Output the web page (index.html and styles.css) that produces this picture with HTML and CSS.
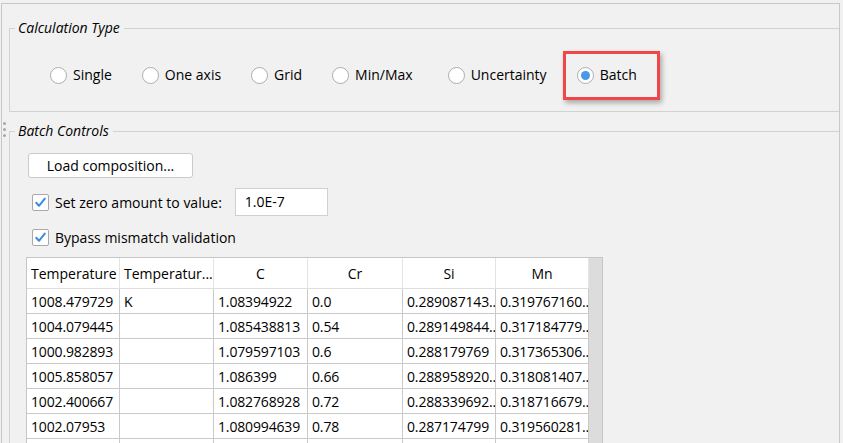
FILE: index.html
```html
<!DOCTYPE html>
<html>
<head>
<meta charset="utf-8">
<link rel="stylesheet" href="styles.css">
</head>
<body>
<div class="panel">
  <span class="grip"><i></i><i></i><i></i></span>
  <fieldset class="group calc">
    <legend>Calculation Type</legend>
    <div class="radio-row">
      <label class="radio"><span class="circle"></span>Single</label>
      <label class="radio"><span class="circle"></span>One axis</label>
      <label class="radio"><span class="circle"></span>Grid</label>
      <label class="radio"><span class="circle"></span>Min/Max</label>
      <label class="radio wide"><span class="circle"></span>Uncertainty</label>
      <label class="radio selected"><span class="circle"><span class="dot"></span></span>Batch<span class="highlight"></span></label>
    </div>
  </fieldset>
  <fieldset class="group batch">
    <legend>Batch Controls</legend>
    <button class="btn">Load composition...</button>
    <div class="check-row first">
      <span class="checkbox"><svg width="15" height="15" viewBox="0 0 15 15"><path d="M3.2 7.8 L6 10.8 L11.8 3.6" fill="none" stroke="#3a8be2" stroke-width="2" stroke-linecap="round" stroke-linejoin="round"/></svg></span>
      <span class="check-label">Set zero amount to value:</span>
      <span class="field">1.0E-7</span>
    </div>
    <div class="check-row second">
      <span class="checkbox"><svg width="15" height="15" viewBox="0 0 15 15"><path d="M3.2 7.8 L6 10.8 L11.8 3.6" fill="none" stroke="#3a8be2" stroke-width="2" stroke-linecap="round" stroke-linejoin="round"/></svg></span>
      <span class="check-label">Bypass mismatch validation</span>
    </div>
    <div class="table">
      <div class="grid">
        <div class="hcell">Temperature</div>
        <div class="hcell">Temperatur...</div>
        <div class="hcell center">C</div>
        <div class="hcell center">Cr</div>
        <div class="hcell center">Si</div>
        <div class="hcell center">Mn</div>

        <div class="cell">1008.479729</div>
        <div class="cell">K</div>
        <div class="cell">1.08394922</div>
        <div class="cell">0.0</div>
        <div class="cell">0.289087143...</div>
        <div class="cell">0.319767160...</div>

        <div class="cell">1004.079445</div>
        <div class="cell"></div>
        <div class="cell">1.085438813</div>
        <div class="cell">0.54</div>
        <div class="cell">0.289149844...</div>
        <div class="cell">0.317184779...</div>

        <div class="cell">1000.982893</div>
        <div class="cell"></div>
        <div class="cell">1.079597103</div>
        <div class="cell">0.6</div>
        <div class="cell">0.288179769</div>
        <div class="cell">0.317365306...</div>

        <div class="cell">1005.858057</div>
        <div class="cell"></div>
        <div class="cell">1.086399</div>
        <div class="cell">0.66</div>
        <div class="cell">0.288958920...</div>
        <div class="cell">0.318081407...</div>

        <div class="cell">1002.400667</div>
        <div class="cell"></div>
        <div class="cell">1.082768928</div>
        <div class="cell">0.72</div>
        <div class="cell">0.288339692...</div>
        <div class="cell">0.318716679...</div>

        <div class="cell">1002.07953</div>
        <div class="cell"></div>
        <div class="cell">1.080994639</div>
        <div class="cell">0.78</div>
        <div class="cell">0.287174799</div>
        <div class="cell">0.319560281...</div>

        <div class="cell">1003.512204</div>
        <div class="cell"></div>
        <div class="cell">1.083216475</div>
        <div class="cell">0.84</div>
        <div class="cell">0.288610432...</div>
        <div class="cell">0.318390512...</div>
      </div>
      <div class="scroll"></div>
    </div>
  </fieldset>
</div>
</body>
</html>
```

FILE: styles.css
```css
html, body {
  margin: 0;
  padding: 0;
  height: 100%;
  overflow: hidden;
}
body {
  background: #f1f1f1;
  font-family: "Open Sans", "Noto Sans", sans-serif;
  font-size: 14px;
  color: #000;
}
.panel {
  position: relative;
  margin: 3px 3px 0 1px;
  border: 1px solid #c8c8c8;
  border-bottom: 0;
  height: 440px;
  box-sizing: border-box;
}
.grip {
  position: absolute;
  left: 1px;
  top: 118px;
  display: flex;
  flex-direction: column;
  gap: 3px;
}
.grip i {
  display: block;
  width: 3px;
  height: 3px;
  border-radius: 50%;
  background: #a8a8a8;
}
.group {
  margin: 0 0 0 7px;
  padding: 0;
  border: 1px solid #d2d2d2;
  border-right: 0;
  min-width: 0;
}
.group legend {
  margin-left: 5px;
  padding: 0 4px 0 3px;
  font-style: italic;
  line-height: 18px;
  font-size: 14px;
}
.calc {
  margin-top: 15px;
}
.radio-row {
  display: flex;
  align-items: center;
  height: 20px;
  padding: 28px 0 26px 40px;
  gap: 30px;
}
.radio {
  position: relative;
  display: inline-flex;
  align-items: center;
  gap: 6px;
  line-height: 20px;
  white-space: nowrap;
}
.radio.wide {
  margin-left: 5px;
}
.circle {
  width: 15px;
  height: 15px;
  border: 1px solid #adadad;
  border-radius: 50%;
  background: #fff;
  display: inline-flex;
  align-items: center;
  justify-content: center;
}
.dot {
  width: 9px;
  height: 9px;
  border-radius: 50%;
  background: #4a98e6;
}
.highlight {
  position: absolute;
  left: -14px;
  top: -14px;
  width: 97px;
  height: 49px;
  box-sizing: border-box;
  border: 3px solid #f0464a;
  box-shadow: 2px 3px 5px rgba(0, 0, 0, 0.3);
  pointer-events: none;
}
.batch {
  margin-top: 10px;
  border-bottom: 0;
  height: 340px;
}
.btn {
  display: block;
  margin: 13px 0 0 18px;
  width: 165px;
  height: 25px;
  padding: 0;
  background: #fff;
  border: 1px solid #cacaca;
  border-radius: 3px;
  font-family: inherit;
  font-size: 14px;
  color: #000;
}
.check-row {
  display: flex;
  align-items: center;
  margin-left: 22px;
}
.check-row.first {
  margin-top: 10px;
  height: 28px;
}
.check-row.second {
  margin-top: 11px;
  height: 20px;
}
.checkbox {
  width: 15px;
  height: 15px;
  border: 1px solid #a9a9a9;
  border-radius: 2px;
  background: #fff;
  display: inline-flex;
  margin-right: 6px;
}
.check-label {
  white-space: nowrap;
}
.field {
  margin-left: 13px;
  width: 82px;
  height: 26px;
  border: 1px solid #d0d0d0;
  background: #fff;
  padding-left: 9px;
  line-height: 26px;
}
.table {
  display: flex;
  margin: 10px 0 0 16px;
  width: max-content;
  border: 1px solid #c6c6c6;
  border-bottom: 0;
  height: 200px;
  overflow: hidden;
}
.grid {
  display: grid;
  grid-template-columns: 93px 94px 94px 95px 93px 93px;
  grid-auto-rows: 25px;
  grid-template-rows: 31px;
  align-content: start;
}
.hcell, .cell {
  box-sizing: border-box;
  white-space: nowrap;
  overflow: hidden;
  text-overflow: clip;
  padding-left: 4px;
  display: flex;
  align-items: center;
  background: #fff;
}
.cell {
  letter-spacing: -0.15px;
}
.hcell {
  border-right: 1px solid #e4e4e4;
  border-bottom: 1px solid #dedede;
  padding-left: 4px;
}
.hcell.center {
  justify-content: center;
  padding-left: 0;
}
.cell {
  border-right: 1px solid #c9c9c9;
  border-bottom: 1px solid #c9c9c9;
}
.scroll {
  width: 13px;
  background: #dcdcdc;
}
```
